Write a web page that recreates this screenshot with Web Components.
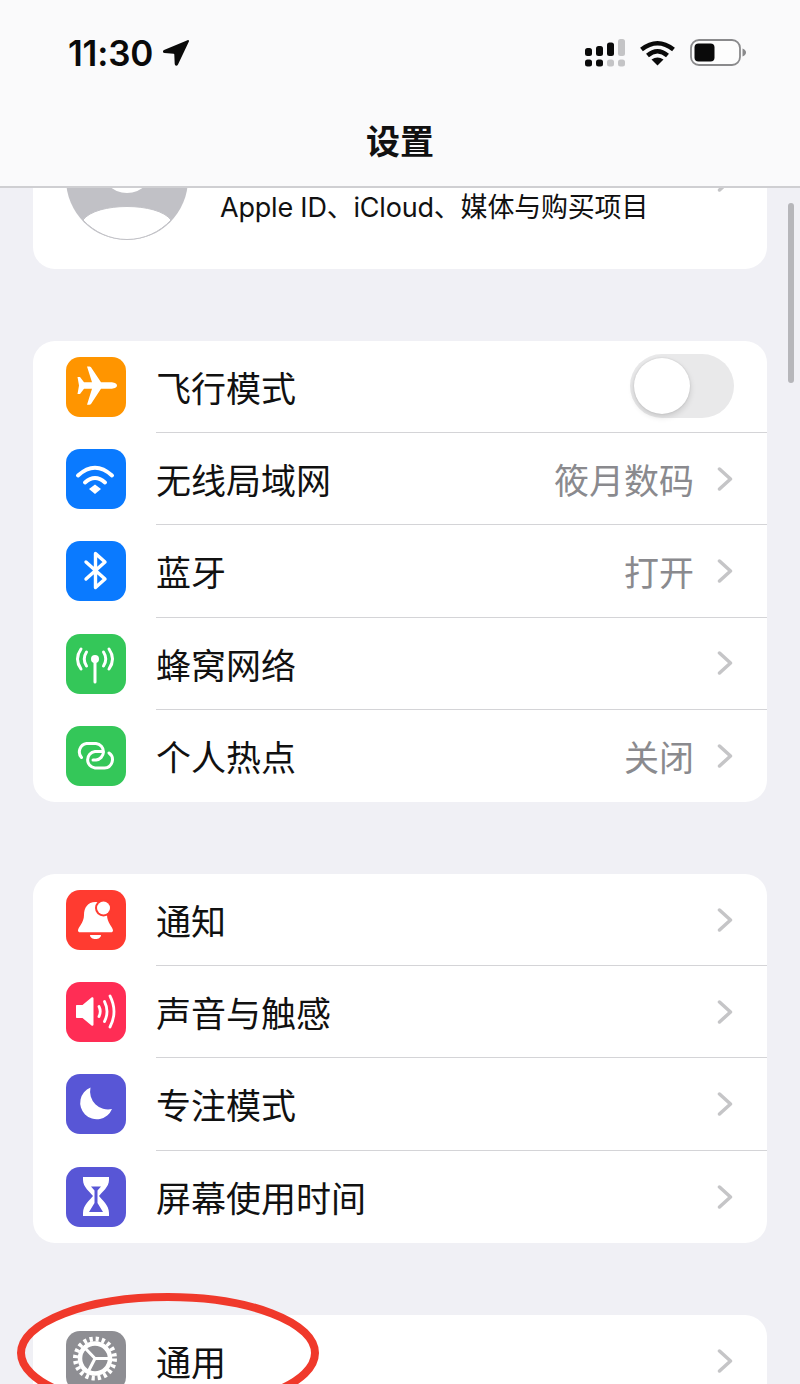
<!DOCTYPE html>
<html lang="zh">
<head>
<meta charset="utf-8">
<title>设置</title>
<style>
    html, body { margin: 0; padding: 0; background: #f0f0f5; }
    body { font-family: "Inter", "Noto Sans CJK SC", sans-serif; }
</style>
</head>
<body>
<settings-page>
    <settings-card slot="cards" class="first">
        <profile-row sub="Apple ID、iCloud、媒体与购买项目"></profile-row>
    </settings-card>
    <settings-card slot="cards">
        <settings-row label="飞行模式" color="#ff9500" control="toggle">
            <svg slot="icon" viewBox="0 0 60 60"><path fill="#fff" d="M51 28.5c0 2.2-3.5 3.2-6 3.2H35L25 47c-.4.6-1 .8-1.6.8H21l5-16.100H18L14 37h-2.500L13 28.500 11.500 20H14l4 5.300h8L21 9.500h2.400c.6 0 1.200.3 1.600.8l10 15H45c2.500 0 6 1 6 3.200z"/></svg>
        </settings-row>
        <settings-row label="无线局域网" value="筱月数码" color="#0a7aff">
            <svg slot="icon" viewBox="0 0 60 60"><path fill="none" stroke="#fff" stroke-width="4" stroke-linecap="round" d="M12 26.500Q29 11 46 26.500M19 33.500Q29 24.500 39 33.500"/><path fill="#fff" d="M23 40l6-4.500 6 4.500-6 5z"/></svg>
        </settings-row>
        <settings-row label="蓝牙" value="打开" color="#0a7aff">
            <svg slot="icon" viewBox="0 0 60 60"><path fill="none" stroke="#fff" stroke-width="3.400" stroke-linecap="round" stroke-linejoin="round" d="M20 21l19 17-9.500 8.500V12.500L39 21 20 38"/></svg>
        </settings-row>
        <settings-row label="蜂窝网络" color="#34c759">
            <svg slot="icon" viewBox="0 0 60 60"><g fill="none" stroke="#fff" stroke-linecap="round"><path stroke-width="3" d="M15 15Q8 25 15 35M43 15Q50 25 43 35M20.500 18Q16 25 20.500 32M37.500 18Q42 25 37.500 32"/><path stroke-width="3" d="M29 25v23"/></g><circle cx="29" cy="25" r="4" fill="#fff"/></svg>
        </settings-row>
        <settings-row label="个人热点" value="关闭" color="#34c759">
            <svg slot="icon" viewBox="0 0 60 60"><path fill="none" stroke="#fff" stroke-width="3" stroke-linecap="round" d="M15.500 31.500A8.500 8.500 0 0 1 20.500 17.500H30A8.500 8.500 0 0 1 37.500 26M37 25.500H29A8.300 8.300 0 0 0 29 42H38.500A8.300 8.300 0 0 0 43 27M27 34H30A8.500 8.500 0 0 0 37.500 26"/></svg>
        </settings-row>
    </settings-card>
    <settings-card slot="cards">
        <settings-row label="通知" color="#ff3b30">
            <svg slot="icon" viewBox="0 0 60 60"><path fill="#fff" d="M29.500 12c-8 0-11.500 6-11.500 13 0 8-6 12-6 15.500 0 1.200.8 1.800 2 1.800h31c1.200 0 2-.6 2-1.800C47 37 41 33 41 25c0-7-3.500-13-11.500-13z"/><path fill="#fff" d="M24 45h11c0 2.500-2.500 4-5.500 4S24 47.500 24 45z"/><circle cx="37.500" cy="18" r="8.500" fill="#ff3b30"/><circle cx="37.500" cy="18" r="6.500" fill="#fff"/></svg>
        </settings-row>
        <settings-row label="声音与触感" color="#ff2d55">
            <svg slot="icon" viewBox="0 0 60 60"><path fill="#fff" d="M11 23h5.500l9-7.500c.8-.6 2-.2 2 1V42.500c0 1.200-1.200 1.600-2 1L16.500 36H11c-.6 0-1-.4-1-1V24c0-.6.4-1 1-1z"/><path fill="none" stroke="#fff" stroke-width="2.800" stroke-linecap="round" d="M33 24.500q2.500 5 0 10M38.500 19.500q5 10 0 20M44 14q8 15.500 0 31"/></svg>
        </settings-row>
        <settings-row label="专注模式" color="#5856d6">
            <svg slot="icon" viewBox="0 0 60 60"><path fill="#fff" d="M24.500 13.500A16.500 16.500 0 1 0 46 35 18 18 0 0 1 24.500 13.500z"/></svg>
        </settings-row>
        <settings-row label="屏幕使用时间" color="#5856d6">
            <svg slot="icon" viewBox="0 0 60 60"><path fill="#fff" d="M17 10h26v3c0 7-7 12-10 16 3 4 10 9 10 17v3H17v-3c0-8 7-13 10-17-3-4-10-9-10-16z"/><path fill="#5856d6" d="M25 19.500h10l-3.500 4v12.500l5.500 9H23l5.500-9V23.500z"/></svg>
        </settings-row>
    </settings-card>
    <settings-card slot="cards">
        <settings-row label="通用" color="#8e8e93">
            <svg slot="icon" viewBox="0 0 60 60"><g fill="none" stroke="#fff"><circle cx="29" cy="27.500" r="19.500" stroke-width="5" stroke-dasharray="3.200 2.930"/><circle cx="29" cy="27.500" r="15" stroke-width="4.500"/><path stroke-width="3" d="M29 27.500L19 17M29 27.500H44M29 27.500L22 41"/></g></svg>
        </settings-row>
    </settings-card>
</settings-page>

<template id="page-tpl">
    <style>
        :host {
            background: #f0f0f5;
            display: block;
            height: 1384px;
            overflow: hidden;
            position: relative;
            width: 800px;
        }
        .scroll {
            display: flex;
            flex-direction: column;
            gap: 72px;
            padding: 101px 33px 0;
        }
        .scrollbar {
            background: #b6b6ba;
            border-radius: 3px;
            height: 180px;
            position: absolute;
            right: 6px;
            top: 203px;
            width: 6px;
        }
        .mark {
            height: 130px;
            left: 0;
            position: absolute;
            top: 1284px;
            width: 340px;
        }
    </style>
    <div class="scroll"><slot name="cards"></slot></div>
    <div class="scrollbar"></div>
    <nav-header title="设置"></nav-header>
    <svg class="mark" viewBox="0 0 340 130"><ellipse cx="168" cy="69" rx="147" ry="56" fill="none" stroke="#f0392b" stroke-width="8"/></svg>
</template>

<template id="nav-tpl">
    <style>
        :host {
            background: #fafafb;
            border-bottom: 2px solid #cfcfd2;
            box-sizing: border-box;
            display: flex;
            flex-direction: column;
            height: 188px;
            left: 0;
            position: absolute;
            right: 0;
            top: 0;
        }
        .status {
            align-items: center;
            display: flex;
            height: 54px;
            justify-content: space-between;
            padding: 26px 53px 0 68px;
        }
        .left { align-items: center; display: flex; gap: 10px; }
        .time {
            color: #0a0a0a;
            font: 600 35px/1 "Inter", sans-serif;
            letter-spacing: -.2px;
        }
        .right { align-items: center; display: flex; gap: 15px; }
        .right svg, .left svg { display: block; }
        h1 {
            color: #111;
            font: 700 34px/1 "Noto Sans CJK SC", sans-serif;
            margin: 0;
            padding-top: 43px;
            text-align: center;
        }
    </style>
    <div class="status">
        <div class="left">
            <span class="time">11:30</span>
            <svg width="27" height="28" viewBox="0 0 27 28"><path fill="#0a0a0a" d="M24.500 1.200c1-.5 1.800.3 1.400 1.300L15 25.500c-1 1.900-3.200 1.500-3.300-.7l-.4-9.400c0-.5-.3-.7-.7-.7L1.500 14C-.3 14-.7 12 1 11z"/></svg>
        </div>
        <div class="right">
            <svg width="40" height="28" viewBox="0 0 40 28">
                <g fill="#0a0a0a"><rect x="0" y="9" width="7" height="8" rx="2.500"/><rect x="11" y="7" width="7" height="10" rx="2.500"/><rect x="22" y="3.500" width="7" height="13.500" rx="2.500"/>
                <rect x="0" y="20.500" width="7" height="7" rx="2.500"/><rect x="11" y="20.500" width="7" height="7" rx="2.500"/></g>
                <g fill="#c4c4c6"><rect x="33" y="0" width="7" height="17" rx="2.500"/><rect x="22" y="20.500" width="7" height="7" rx="2.500"/><rect x="33" y="20.500" width="7" height="7" rx="2.500"/></g>
            </svg>
            <svg width="35" height="26" viewBox="0 0 35 26"><path fill="none" stroke="#0a0a0a" stroke-width="4.500" d="M1.500 9.500Q17.500-3 33.500 9.500M7.500 15.500Q17.500 7 27.500 15.500"/><path fill="#0a0a0a" d="M11.500 19.500q6-4 12 0l-6 6z"/></svg>
            <svg width="57" height="28" viewBox="0 0 57 28"><rect x="1" y="1" width="49" height="25" rx="8" fill="#fff" fill-opacity=".5" stroke="#8a8a8c" stroke-width="1.800"/><rect x="4.500" y="4.500" width="20" height="18" rx="4" fill="#0a0a0a"/><path fill="#8a8a8c" d="M52.500 9.500q3.500 1.500 3.500 4t-3.500 4z"/></svg>
        </div>
    </div>
    <h1></h1>
</template>

<template id="card-tpl">
    <style>
        :host {
            background: #fff;
            border-radius: 22px;
            display: block;
            overflow: hidden;
        }
    </style>
    <slot></slot>
</template>

<template id="profile-tpl">
    <style>
        :host {
            align-items: flex-end;
            display: flex;
            gap: 32px;
            padding: 17px 34px 29px 33px;
        }
        svg.avatar { display: block; flex: none; }
        .sub {
            color: #111;
            flex: 1;
            font: 400 27px/38px "Inter", "Noto Sans CJK SC", sans-serif;
            letter-spacing: -.2px;
            padding-bottom: 13px;
        }
        svg.chev { align-self: flex-start; display: block; flex: none; margin-top: 50px; }
    </style>
    <svg class="avatar" width="122" height="122" viewBox="0 0 122 122">
        <circle cx="61" cy="61" r="61" fill="#c1c1c6"/>
        <circle cx="61" cy="48" r="27" fill="#fff"/>
        <path fill="#fff" stroke="#c1c1c6" d="M17 102C30 84 92 84 105 102 94 114 78 121.500 61 121.500S28 114 17 102z"/>
    </svg>
    <span class="sub"></span>
    <svg class="chev" width="16" height="24" viewBox="0 0 16 24"><path fill="none" stroke="#c5c5c7" stroke-width="3.500" stroke-linecap="round" stroke-linejoin="round" d="M2.500 2l11 10-11 10"/></svg>
</template>

<template id="row-tpl">
    <style>
        :host {
            align-items: stretch;
            display: flex;
            height: 92.200px;
        }
        .tile {
            align-self: center;
            border-radius: 14px;
            flex: none;
            height: 60px;
            margin: 0 30.500px 0 33px;
            overflow: hidden;
            width: 59.500px;
        }
        ::slotted(svg) { display: block; height: 60px; width: 60px; }
        .body {
            align-items: center;
            border-bottom: 1px solid #d4d4d7;
            display: flex;
            flex: 1;
            gap: 23px;
            padding-right: 34px;
        }
        :host(:last-child) .body { border-bottom: 0; }
        .label {
            color: #111;
            flex: 1;
            font: 400 35px/1 "Noto Sans CJK SC", sans-serif;
        }
        .value {
            color: #8a8a8e;
            font: 400 35px/1 "Noto Sans CJK SC", sans-serif;
        }
        svg.chev { display: block; flex: none; }
    </style>
    <div class="tile"><slot name="icon"></slot></div>
    <div class="body">
        <span class="label"></span>
        <span class="value"></span>
        <svg class="chev" width="16" height="24" viewBox="0 0 16 24"><path fill="none" stroke="#c5c5c7" stroke-width="3.500" stroke-linecap="round" stroke-linejoin="round" d="M2.500 2l11 10-11 10"/></svg>
    </div>
</template>

<template id="toggle-tpl">
    <style>
        :host {
            background: #e9e9ea;
            border-radius: 32px;
            box-sizing: border-box;
            display: block;
            flex: none;
            height: 64px;
            margin-top: -2px;
            padding: 4px;
            width: 104px;
        }
        .knob {
            background: #fff;
            border-radius: 50%;
            box-shadow: 0 3px 6px rgba(0, 0, 0, .14), 0 0 2px rgba(0, 0, 0, .12);
            height: 56px;
            width: 56px;
        }
    </style>
    <div class="knob"></div>
</template>

<script>
'use strict'

function stamp(host, id) {
    const shadow = host.attachShadow({mode: 'open'});
    shadow.appendChild(document.getElementById(id).content.cloneNode(true));
    return shadow;
}

class SettingsPage extends HTMLElement {
    constructor() {
        super();
        stamp(this, 'page-tpl');
    }
}

class NavHeader extends HTMLElement {
    constructor() {
        super();
        stamp(this, 'nav-tpl');
    }

    connectedCallback() {
        this.shadowRoot.querySelector('h1').textContent = this.getAttribute('title');
    }
}

class SettingsCard extends HTMLElement {
    constructor() {
        super();
        stamp(this, 'card-tpl');
    }
}

class ProfileRow extends HTMLElement {
    constructor() {
        super();
        stamp(this, 'profile-tpl');
    }

    connectedCallback() {
        this.shadowRoot.querySelector('.sub').textContent = this.getAttribute('sub');
    }
}

class ToggleSwitch extends HTMLElement {
    constructor() {
        super();
        stamp(this, 'toggle-tpl');
    }
}

class SettingsRow extends HTMLElement {
    constructor() {
        super();
        stamp(this, 'row-tpl');
    }

    connectedCallback() {
        const shadow = this.shadowRoot;
        shadow.querySelector('.label').textContent = this.getAttribute('label');
        shadow.querySelector('.value').textContent = this.getAttribute('value') || '';
        shadow.querySelector('.tile').style.background = this.getAttribute('color');

        if (this.getAttribute('control') === 'toggle') {
            shadow.querySelector('.chev').replaceWith(document.createElement('toggle-switch'));
            shadow.querySelector('.value').remove();
            shadow.querySelector('.body').style.paddingRight = '33px';
        }
    }
}

customElements.define('settings-page', SettingsPage);
customElements.define('nav-header', NavHeader);
customElements.define('settings-card', SettingsCard);
customElements.define('profile-row', ProfileRow);
customElements.define('toggle-switch', ToggleSwitch);
customElements.define('settings-row', SettingsRow);
</script>
</body>
</html>
